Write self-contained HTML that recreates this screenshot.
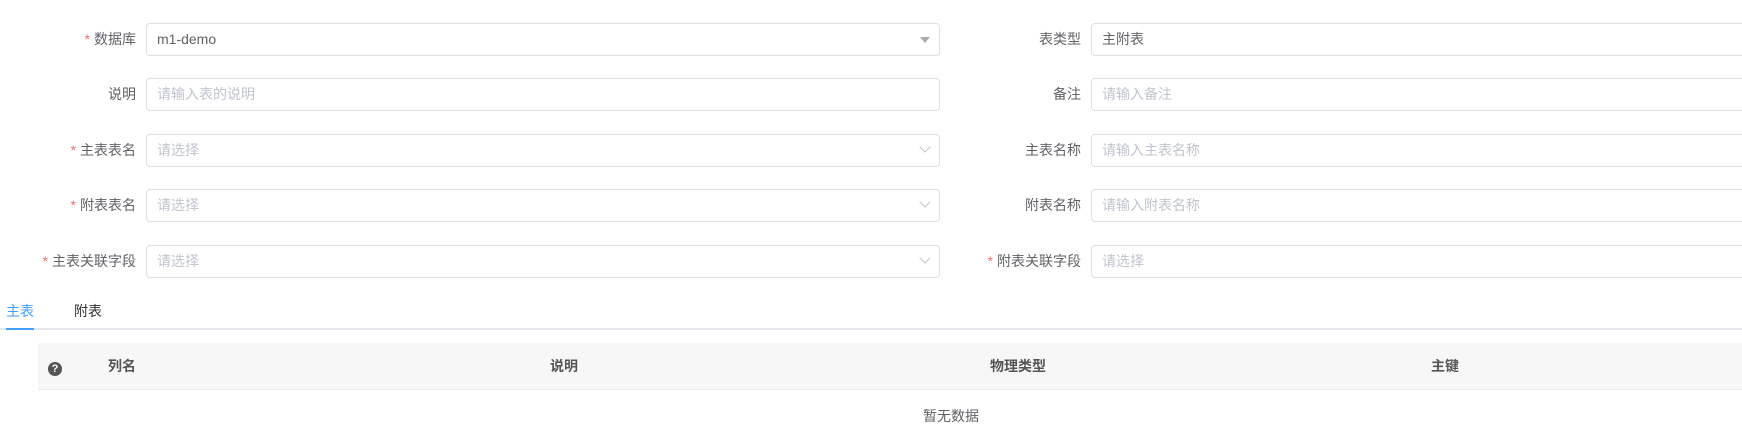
<!DOCTYPE html>
<html><head><meta charset="utf-8"><style>
*{box-sizing:border-box;margin:0;padding:0}
body{width:1742px;height:437px;overflow:hidden;background:#fff;font-family:"Liberation Sans","Noto Sans CJK SC",sans-serif;font-size:14px;color:#606266;position:relative}
.lbl{position:absolute;text-align:right;line-height:33px;height:33px}
.lbl b{color:#f56c6c;font-weight:normal;margin-right:4px}
.inp{position:absolute;height:33px;border:1px solid #dcdfe6;border-radius:4px;padding-left:10px;line-height:31px;background:#fff}
.ph{color:#c0c4cc}
.arr{position:absolute;right:10px;top:11px;width:8px;height:8px;border-right:1px solid #c0c4cc;border-bottom:1px solid #c0c4cc;transform:rotate(45deg);top:8px}
.tri{position:absolute;right:9px;top:13px;width:0;height:0;border-left:5px solid transparent;border-right:5px solid transparent;border-top:6px solid #a8abb2}
.th{position:absolute;top:343px;line-height:47px;font-weight:bold;color:#555}
</style></head><body>
<div class="lbl" style="left:0;width:136px;top:23px"><b>*</b>数据库</div>
<div class="inp" style="left:146px;width:794px;top:23px;color:#606266">m1-demo<span class="tri"></span></div>
<div class="lbl" style="left:0;width:136px;top:78px">说明</div>
<div class="inp ph" style="left:146px;width:794px;top:78px">请输入表的说明</div>
<div class="lbl" style="left:0;width:136px;top:134px"><b>*</b>主表表名</div>
<div class="inp ph" style="left:146px;width:794px;top:134px">请选择<span class="arr"></span></div>
<div class="lbl" style="left:0;width:136px;top:189px"><b>*</b>附表表名</div>
<div class="inp ph" style="left:146px;width:794px;top:189px">请选择<span class="arr"></span></div>
<div class="lbl" style="left:0;width:136px;top:245px"><b>*</b>主表关联字段</div>
<div class="inp ph" style="left:146px;width:794px;top:245px">请选择<span class="arr"></span></div>

<div class="lbl" style="left:900px;width:181px;top:23px">表类型</div>
<div class="inp" style="left:1091px;width:700px;top:23px">主附表</div>
<div class="lbl" style="left:900px;width:181px;top:78px">备注</div>
<div class="inp ph" style="left:1091px;width:700px;top:78px">请输入备注</div>
<div class="lbl" style="left:900px;width:181px;top:134px">主表名称</div>
<div class="inp ph" style="left:1091px;width:700px;top:134px">请输入主表名称</div>
<div class="lbl" style="left:900px;width:181px;top:189px">附表名称</div>
<div class="inp ph" style="left:1091px;width:700px;top:189px">请输入附表名称</div>
<div class="lbl" style="left:900px;width:181px;top:245px"><b>*</b>附表关联字段</div>
<div class="inp ph" style="left:1091px;width:700px;top:245px">请选择</div>

<div style="position:absolute;left:6px;top:300px;line-height:22px;color:#409eff">主表</div>
<div style="position:absolute;left:74px;top:300px;line-height:22px;color:#303133">附表</div>
<div style="position:absolute;left:0;right:0;top:328px;height:2px;background:#e4e7ed"></div>
<div style="position:absolute;left:6px;width:28px;top:328px;height:2px;background:#409eff"></div>

<div style="position:absolute;left:38px;right:0;top:343px;height:47px;background:#f7f7f7;border-bottom:1px solid #ebeef5"></div>
<div style="position:absolute;left:48px;top:362px;width:14px;height:14px;border-radius:50%;background:#555;color:#fff;font-size:11px;font-weight:bold;text-align:center;line-height:14px">?</div>
<div class="th" style="left:108px">列名</div>
<div class="th" style="left:550px">说明</div>
<div class="th" style="left:990px">物理类型</div>
<div class="th" style="left:1431px">主键</div>
<div style="position:absolute;left:923px;top:405px;line-height:22px;color:#606266">暂无数据</div>
</body></html>
